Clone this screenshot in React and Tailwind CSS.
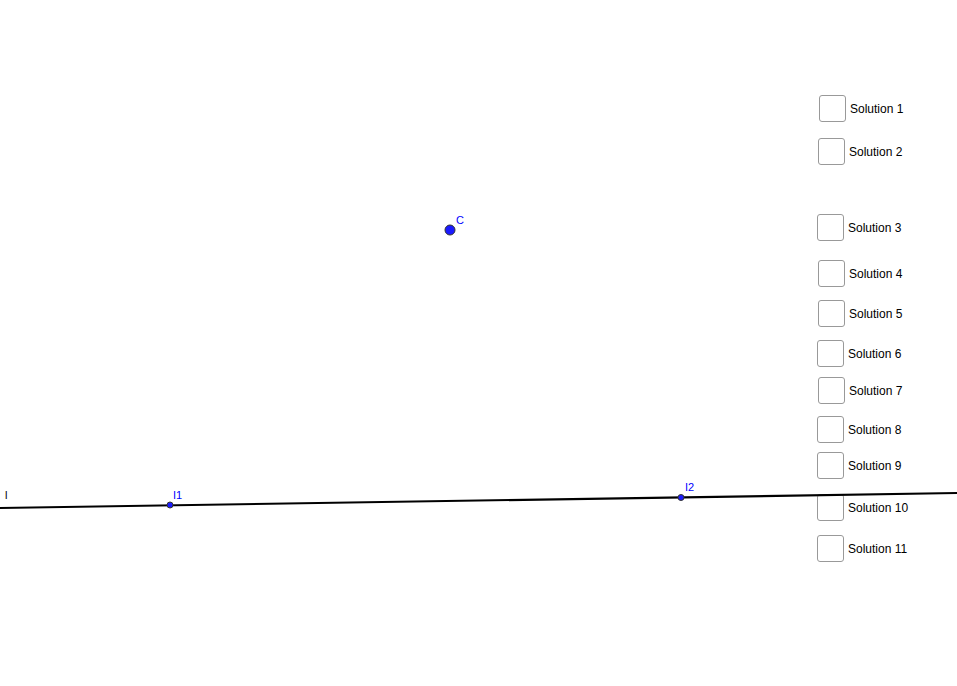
const solutions = [
  { n: 1, x: 819, y: 95 },
  { n: 2, x: 818, y: 138 },
  { n: 3, x: 817, y: 214 },
  { n: 4, x: 818, y: 260 },
  { n: 5, x: 818, y: 300 },
  { n: 6, x: 817, y: 340 },
  { n: 7, x: 818, y: 377 },
  { n: 8, x: 817, y: 416 },
  { n: 9, x: 817, y: 452 },
  { n: 10, x: 817, y: 494 },
  { n: 11, x: 817, y: 535 },
];

function Label({ x, y, children, color = 'text-[#0000ff]' }) {
  return (
    <span
      className={`absolute text-[11px] leading-none ${color}`}
      style={{ left: x, top: y }}
    >
      {children}
    </span>
  );
}

export default function App() {
  return (
    <div className="relative w-[957px] h-[686px] bg-white overflow-hidden font-['Liberation_Sans',Arial,sans-serif]">
      {/* checkboxes */}
      {solutions.map((s) => (
        <label
          key={s.n}
          className="absolute flex items-center gap-[4px] text-[12px] leading-none text-black"
          style={{ left: s.x, top: s.y }}
        >
          <span className="block w-[27px] h-[27px] rounded-[3px] border-[1.5px] border-[#999999] bg-white" />
          <span className="pt-[1px]">Solution {s.n}</span>
        </label>
      ))}

      {/* drawing */}
      <svg className="absolute inset-0 pointer-events-none" width="957" height="686">
        <line x1="0" y1="508" x2="957" y2="493" stroke="#000" strokeWidth="2.2" />
        <circle cx="450" cy="230" r="5" fill="#1a1aff" stroke="#333" strokeWidth="1" />
        <circle cx="170" cy="505" r="3" fill="#1a1aff" stroke="#333" strokeWidth="1" />
        <circle cx="681" cy="497.5" r="3" fill="#1a1aff" stroke="#333" strokeWidth="1" />
      </svg>

      <Label x={456} y={215}>C</Label>
      <Label x={173} y={490}>I1</Label>
      <Label x={685} y={482}>I2</Label>
      <Label x={5} y={490} color="text-black">l</Label>
    </div>
  );
}
